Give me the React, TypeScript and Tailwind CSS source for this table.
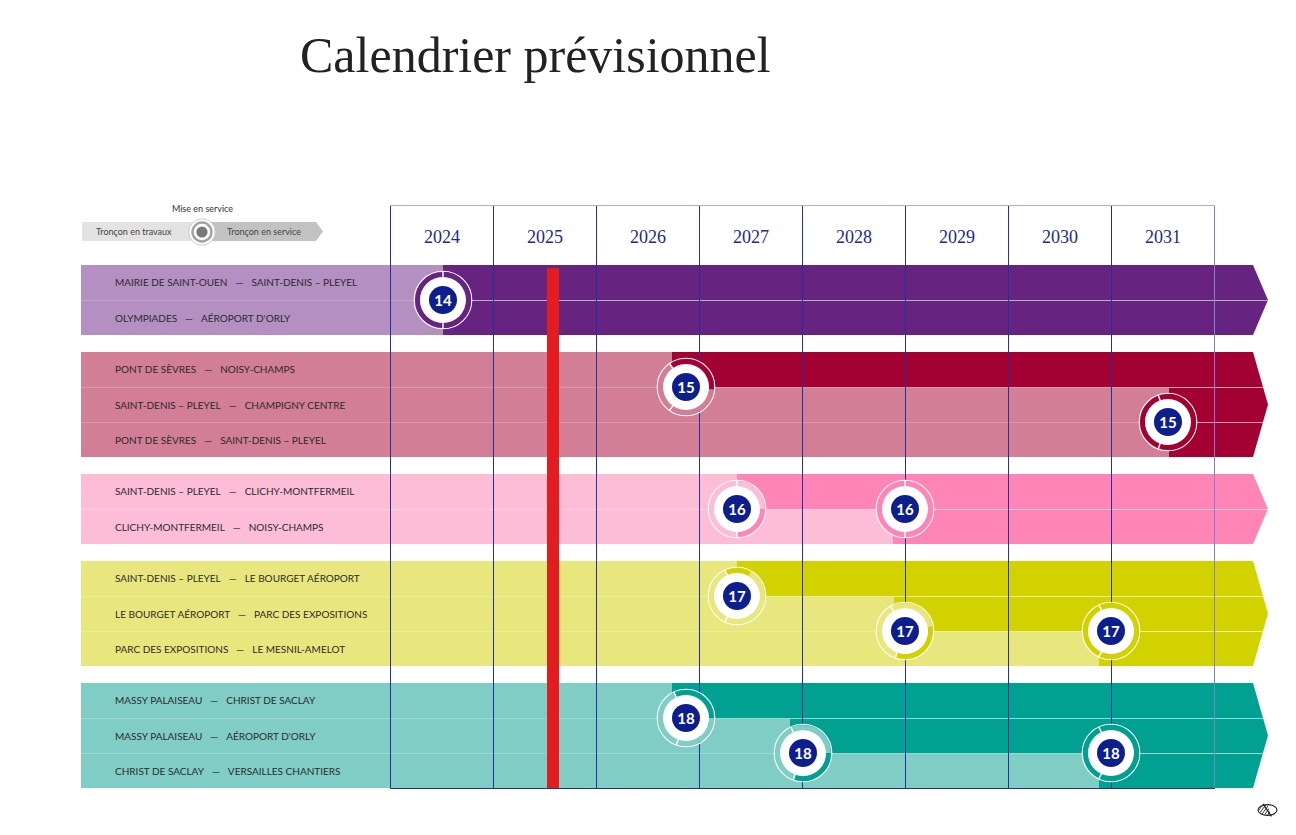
import React from 'react'

type Row = { from: string; to: string; w: string }
type Group = { light: string; dark: string; lightBg: string; darkBg: string; rows: Row[] }

const groups: Group[] = [
  {
    light: '#b48fc1', dark: '#662480', lightBg: 'bg-[#b48fc1]', darkBg: 'bg-[#662480]',
    rows: [
      { from: 'MAIRIE DE SAINT-OUEN', to: 'SAINT-DENIS – PLEYEL', w: 'w-[362px]' },
      { from: 'OLYMPIADES', to: "AÉROPORT D'ORLY", w: 'w-[362px]' },
    ],
  },
  {
    light: '#d17e96', dark: '#a30034', lightBg: 'bg-[#d17e96]', darkBg: 'bg-[#a30034]',
    rows: [
      { from: 'PONT DE SÈVRES', to: 'NOISY-CHAMPS', w: 'w-[591px]' },
      { from: 'SAINT-DENIS – PLEYEL', to: 'CHAMPIGNY CENTRE', w: 'w-[1088px]' },
      { from: 'PONT DE SÈVRES', to: 'SAINT-DENIS – PLEYEL', w: 'w-[1088px]' },
    ],
  },
  {
    light: '#fdbdd7', dark: '#fe85b5', lightBg: 'bg-[#fdbdd7]', darkBg: 'bg-[#fe85b5]',
    rows: [
      { from: 'SAINT-DENIS – PLEYEL', to: 'CLICHY-MONTFERMEIL', w: 'w-[656px]' },
      { from: 'CLICHY-MONTFERMEIL', to: 'NOISY-CHAMPS', w: 'w-[812px]' },
    ],
  },
  {
    light: '#e8e77d', dark: '#d2d200', lightBg: 'bg-[#e8e77d]', darkBg: 'bg-[#d2d200]',
    rows: [
      { from: 'SAINT-DENIS – PLEYEL', to: 'LE BOURGET AÉROPORT', w: 'w-[656px]' },
      { from: 'LE BOURGET AÉROPORT', to: 'PARC DES EXPOSITIONS', w: 'w-[813px]' },
      { from: 'PARC DES EXPOSITIONS', to: 'LE MESNIL-AMELOT', w: 'w-[1018px]' },
    ],
  },
  {
    light: '#80cdc6', dark: '#00a190', lightBg: 'bg-[#80cdc6]', darkBg: 'bg-[#00a190]',
    rows: [
      { from: 'MASSY PALAISEAU', to: 'CHRIST DE SACLAY', w: 'w-[591px]' },
      { from: 'MASSY PALAISEAU', to: "AÉROPORT D'ORLY", w: 'w-[709px]' },
      { from: 'CHRIST DE SACLAY', to: 'VERSAILLES CHANTIERS', w: 'w-[1018px]' },
    ],
  },
]

const years = ['2024', '2025', '2026', '2027', '2028', '2029', '2030', '2031']

// badge centres, relative to the chart box (left 81, top 200)
const badges = [
  { n: 14, g: 0, pos: 'left-[332px] top-[70px]', dark: [0, 360], ticks: [0, 180] },
  { n: 15, g: 1, pos: 'left-[575px] top-[157px]', dark: [-35, 95], ticks: [-35, 215] },
  { n: 15, g: 1, pos: 'left-[1057px] top-[192px]', dark: [0, 360], ticks: [-20, 200] },
  { n: 16, g: 2, pos: 'left-[626px] top-[279px]', dark: [90, 180], ticks: [0, 180] },
  { n: 16, g: 2, pos: 'left-[794px] top-[279px]', dark: [0, 360], ticks: [0, 180] },
  { n: 17, g: 3, pos: 'left-[626px] top-[366px]', dark: [-25, 30], ticks: [-25, 205] },
  { n: 17, g: 3, pos: 'left-[794px] top-[401px]', dark: [80, 200], ticks: [-30, 200] },
  { n: 17, g: 3, pos: 'left-[1000px] top-[401px]', dark: [0, 360], ticks: [-25, 205] },
  { n: 18, g: 4, pos: 'left-[575px] top-[488px]', dark: [-25, 90], ticks: [-25, 200] },
  { n: 18, g: 4, pos: 'left-[692px] top-[523px]', dark: [90, 200], ticks: [-25, 200] },
  { n: 18, g: 4, pos: 'left-[1000px] top-[523px]', dark: [0, 360], ticks: [-25, 205] },
]

function pt(r: number, a: number) {
  const t = (a * Math.PI) / 180
  return [30 + r * Math.sin(t), 30 - r * Math.cos(t)]
}

function arc(r: number, a0: number, a1: number) {
  const [x0, y0] = pt(r, a0)
  const [x1, y1] = pt(r, a1)
  const large = a1 - a0 > 180 ? 1 : 0
  return `M${x0} ${y0} A${r} ${r} 0 ${large} 1 ${x1} ${y1}`
}

function Badge({ n, light, dark, range, ticks }: { n: number; light: string; dark: string; range: number[]; ticks: number[] }) {
  const full = range[1] - range[0] >= 360
  return (
    <svg width="60" height="60" viewBox="0 0 60 60">
      <circle cx="30" cy="30" r="28.8" fill="none" stroke="#fff" strokeWidth="1.1" />
      <circle cx="30" cy="30" r="25.5" fill="none" stroke={full ? dark : light} strokeWidth="5" />
      {!full && <path d={arc(25.5, range[0], range[1])} fill="none" stroke={dark} strokeWidth="5" />}
      <circle cx="30" cy="30" r="23" fill="#fff" />
      {ticks.map(t => {
        const [x0, y0] = pt(22.5, t)
        const [x1, y1] = pt(29, t)
        return <line key={t} x1={x0} y1={y0} x2={x1} y2={y1} stroke="#fff" strokeWidth="1.4" />
      })}
      <circle cx="30" cy="30" r="14" fill="#0d1f8f" />
      <text x="30" y="35.5" textAnchor="middle" fill="#fff" fontSize="15" fontWeight="700" fontFamily="Lato, 'Noto Sans', sans-serif">
        {n}
      </text>
    </svg>
  )
}

function Legend() {
  return (
    <div className="ml-[1px] w-[241px] font-['Lato',sans-serif]">
      <div className="pt-[4px] text-center text-[9px] leading-[10px] text-[#333]">Mise en service</div>
      <div className="relative mt-[8px] flex h-[19px] text-[9px] leading-[19px] text-[#444]">
        <div className="w-[120px] bg-[#e3e3e3] pl-[14px]">Tronçon en travaux</div>
        <div className="flex-1 bg-[#c2c2c2] pl-[25px] [clip-path:polygon(0_0,114px_0,121px_50%,114px_100%,0_100%)]">
          Tronçon en service
        </div>
        <svg className="absolute left-[106px] top-[-4.5px]" width="28" height="28" viewBox="0 0 28 28">
          <circle cx="14" cy="14" r="13.2" fill="#fff" stroke="#cfcfcf" strokeWidth="1" />
          <circle cx="14" cy="14" r="9.5" fill="#fff" stroke="#a3a3a3" strokeWidth="2.4" />
          <circle cx="14" cy="14" r="5.6" fill="#7a7a7a" />
        </svg>
      </div>
    </div>
  )
}

function EyeIcon() {
  return (
    <svg width="21" height="14" viewBox="0 0 21 14">
      <defs>
        <clipPath id="eye-left">
          <path d="M1.5 7 C4 2.2 8 1.5 10.5 1.5 L14 12.5 C8 12.8 4 11 1.5 7 Z" />
        </clipPath>
      </defs>
      <ellipse cx="10.5" cy="7" rx="9.5" ry="5.4" fill="none" stroke="#222" strokeWidth="1.1" />
      <g clipPath="url(#eye-left)" stroke="#222" strokeWidth="0.9">
        {[-6, -3, 0, 3, 6, 9, 12, 15].map(o => (
          <line key={o} x1={o} y1="14" x2={o + 10} y2="0" />
        ))}
      </g>
      <line x1="6" y1="0.8" x2="14.5" y2="13.4" stroke="#222" strokeWidth="1.3" />
    </svg>
  )
}

export default function App() {
  return (
    <div className="min-h-[835px] w-[1296px] bg-white">
      <h1 className="pl-[300px] pt-[30px] font-['Liberation_Serif',serif] text-[50px] leading-none text-[#222]">
        Calendrier prévisionnel
      </h1>

      <div className="ml-[81px] mt-[120px] grid w-[1187px]">
        {/* bars */}
        <div className="col-start-1 row-start-1 flex flex-col">
          <div className="h-[65px]">
            <Legend />
          </div>
          {groups.map((g, gi) => (
            <div
              key={gi}
              className={`${gi > 0 ? 'mt-[17px]' : ''} flex flex-col [clip-path:polygon(0_0,1172px_0,1187px_50%,1172px_100%,0_100%)]`}
            >
              {g.rows.map((r, ri) => (
                <div key={ri} className={`flex h-[35px] ${g.darkBg} ${ri > 0 ? 'border-t border-white/60' : ''}`}>
                  <div className={`${r.w} ${g.lightBg} flex items-center pl-[34px] font-['Lato',sans-serif] text-[10px] text-[#2b2b2b]`}>
                    <span>{r.from}</span>
                    <span className="mx-[8px]">—</span>
                    <span>{r.to}</span>
                  </div>
                </div>
              ))}
            </div>
          ))}
        </div>

        {/* year grid */}
        <div className="pointer-events-none relative z-10 col-start-1 row-start-1 ml-[309px] mt-[5px] flex h-[584px] w-[825px] self-start border-b border-t border-b-[#2230a0] border-t-[#a9aedb]">
          {years.map((y, i) => (
            <div
              key={y}
              className={`flex flex-col border-l border-l-[#2230a0] ${i === years.length - 1 ? 'w-[104px] border-r border-r-[#7b85cf]' : 'w-[103px]'}`}
            >
              <div className="flex h-[59px] items-center justify-center pt-[4px] font-['Liberation_Serif',serif] text-[18px] text-[#1b2a8e]">
                {y}
              </div>
              {y === '2025' && <div className="ml-[53px] mt-[3px] w-[12px] flex-1 bg-[#e31c1f]" />}
            </div>
          ))}
        </div>

        {/* badges */}
        <div className="pointer-events-none relative z-20 col-start-1 row-start-1">
          {badges.map((b, i) => (
            <div key={i} className={`absolute ${b.pos}`}>
              <Badge n={b.n} light={groups[b.g].light} dark={groups[b.g].dark} range={b.dark} ticks={b.ticks} />
            </div>
          ))}
        </div>
      </div>

      <div className="mt-[14px] flex justify-end pr-[18px]">
        <EyeIcon />
      </div>
    </div>
  )
}
